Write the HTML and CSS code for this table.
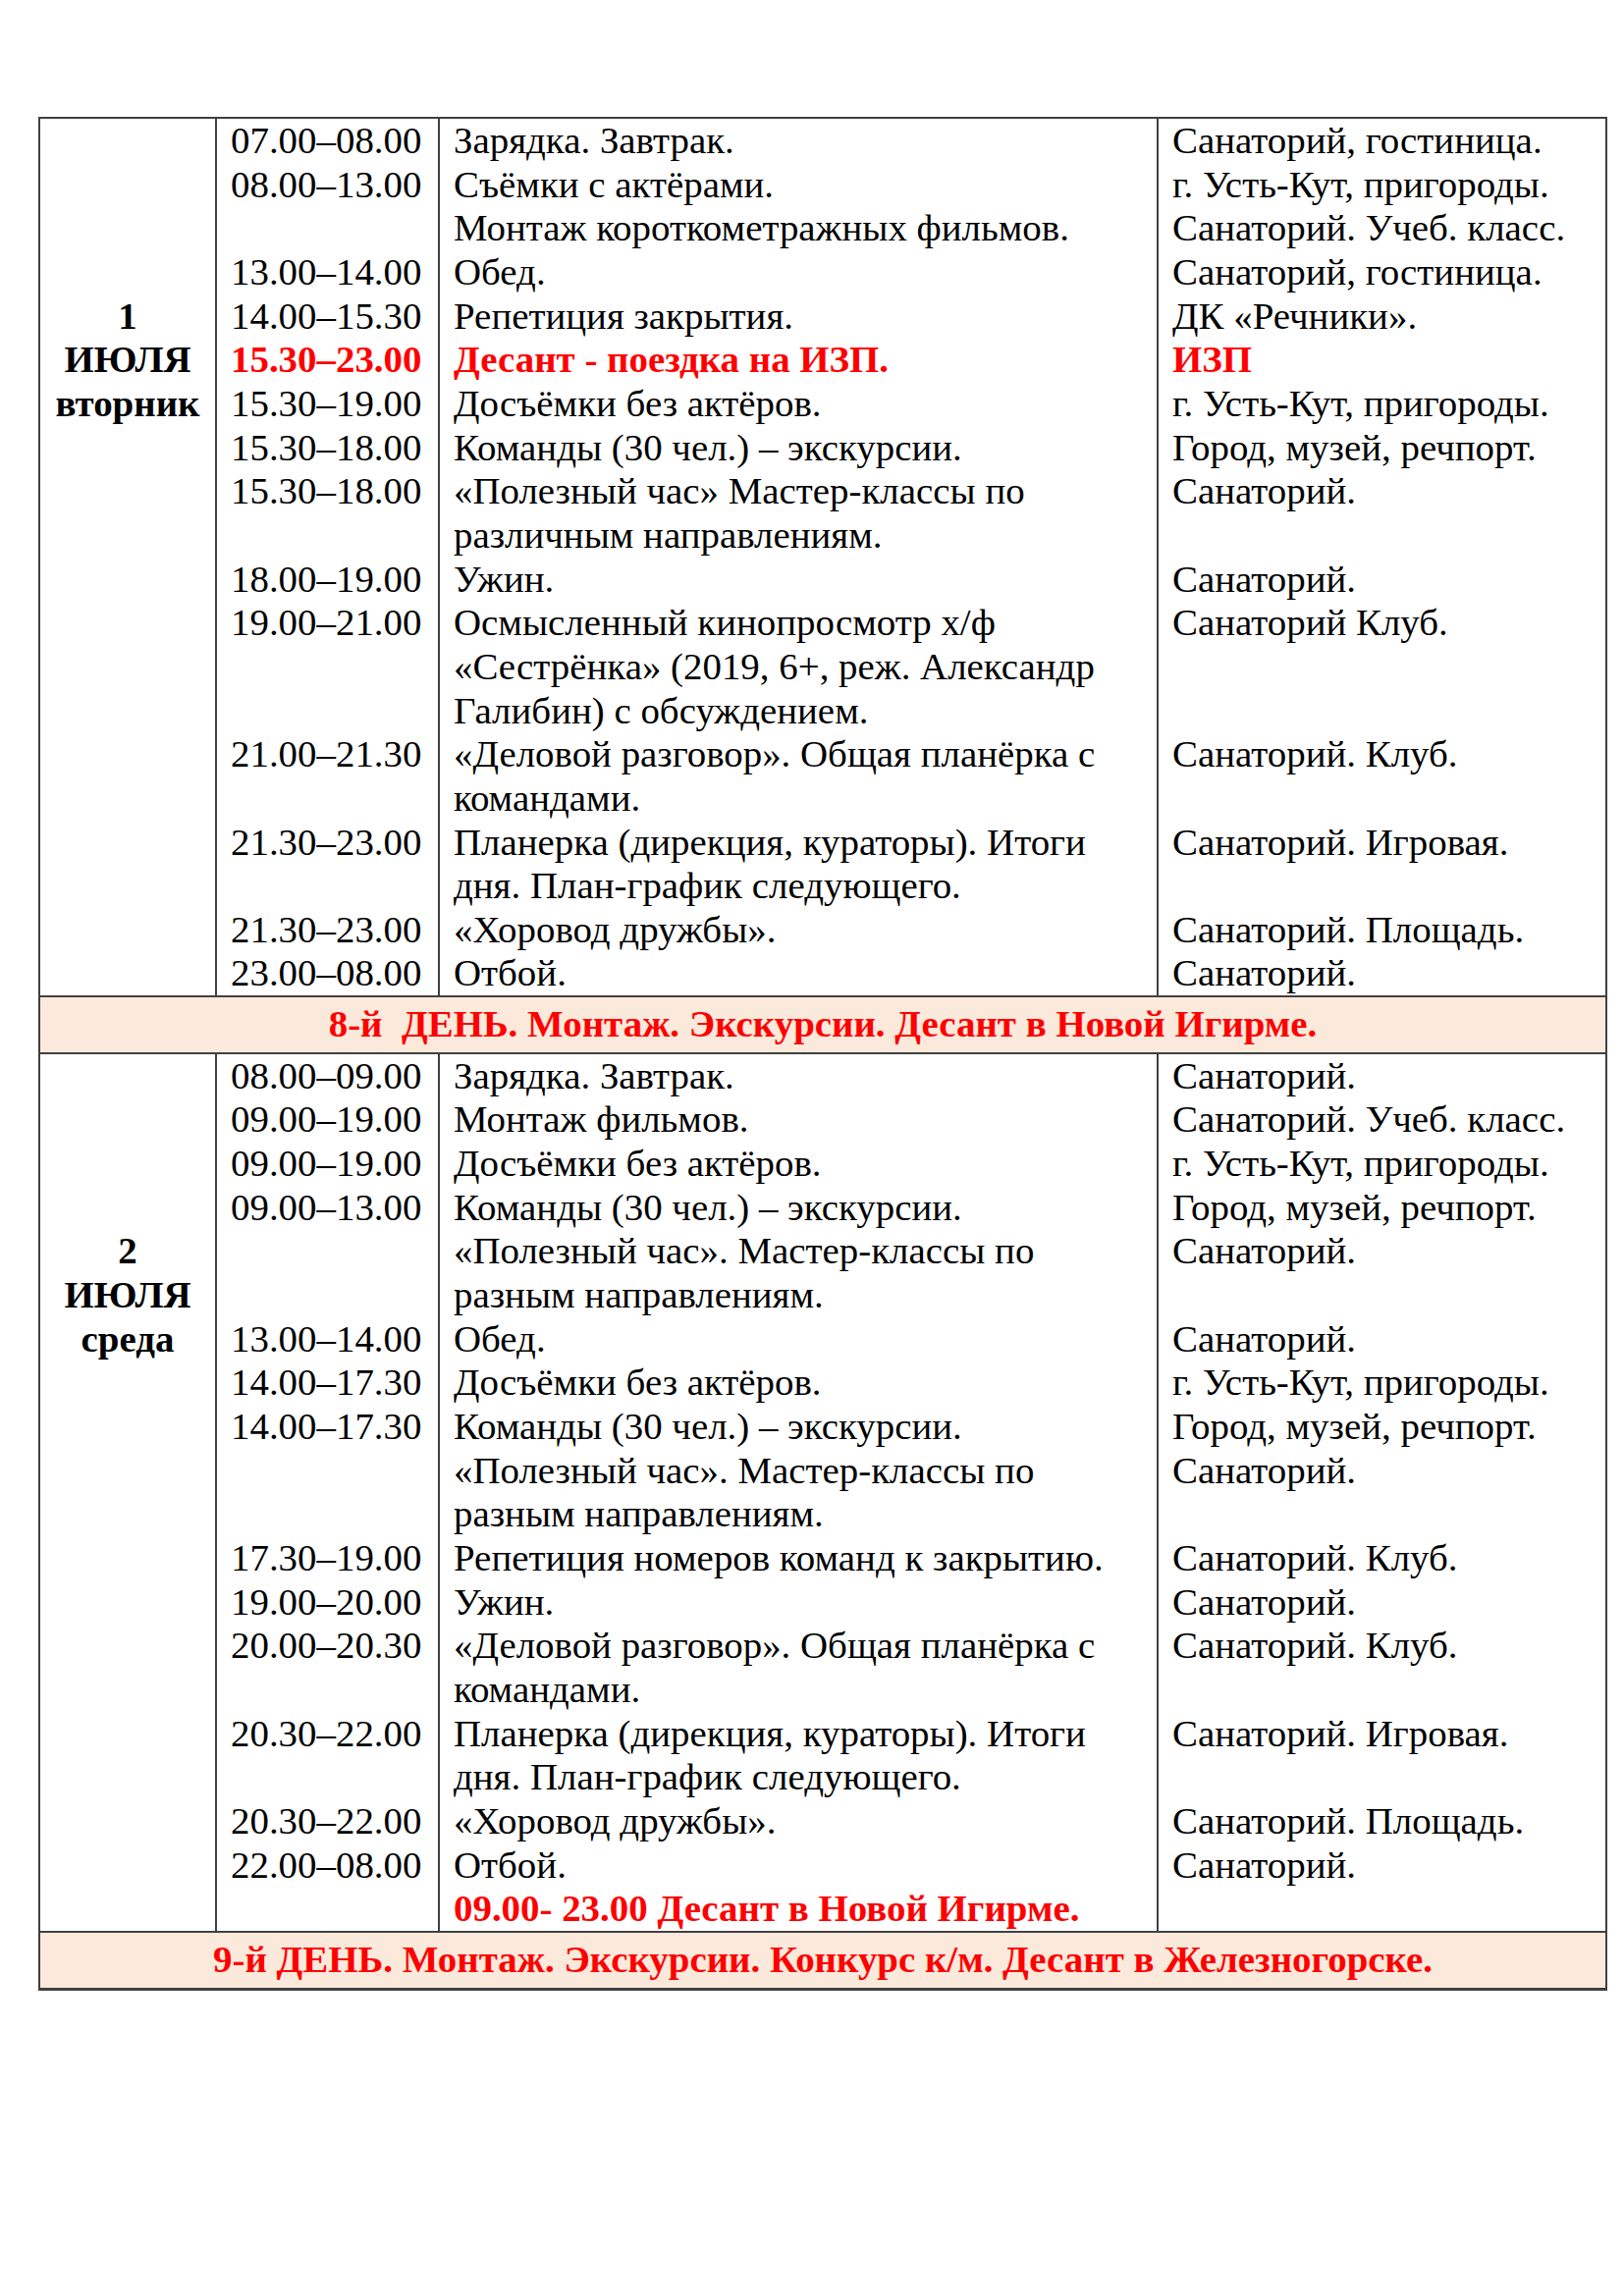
FILE: index.html
```html
<!DOCTYPE html>
<html lang="ru">
<head>
<meta charset="utf-8">
<title>Расписание</title>
<link rel="stylesheet" href="styles.css">
</head>
<body>
<table class="sched">
  <colgroup>
    <col class="c-day"><col class="c-time"><col class="c-act"><col class="c-place">
  </colgroup>
  <tbody>
    <tr>
      <td class="day" rowspan="15">1<br>ИЮЛЯ<br>вторник</td>
      <td class="time">07.00–08.00</td><td class="act">Зарядка. Завтрак.</td><td class="place">Санаторий, гостиница.</td>
    </tr>
    <tr><td class="time">08.00–13.00</td><td class="act">Съёмки с актёрами.</td><td class="place">г. Усть-Кут, пригороды.</td></tr>
    <tr><td class="time"></td><td class="act">Монтаж короткометражных фильмов.</td><td class="place">Санаторий. Учеб. класс.</td></tr>
    <tr><td class="time">13.00–14.00</td><td class="act">Обед.</td><td class="place">Санаторий, гостиница.</td></tr>
    <tr><td class="time">14.00–15.30</td><td class="act">Репетиция закрытия.</td><td class="place">ДК «Речники».</td></tr>
    <tr class="hot"><td class="time">15.30–23.00</td><td class="act">Десант - поездка на ИЗП.</td><td class="place">ИЗП</td></tr>
    <tr><td class="time">15.30–19.00</td><td class="act">Досъёмки без актёров.</td><td class="place">г. Усть-Кут, пригороды.</td></tr>
    <tr><td class="time">15.30–18.00</td><td class="act">Команды (30 чел.) – экскурсии.</td><td class="place">Город, музей, речпорт.</td></tr>
    <tr><td class="time">15.30–18.00</td><td class="act">«Полезный час» Мастер-классы по<br>различным направлениям.</td><td class="place">Санаторий.</td></tr>
    <tr><td class="time">18.00–19.00</td><td class="act">Ужин.</td><td class="place">Санаторий.</td></tr>
    <tr><td class="time">19.00–21.00</td><td class="act">Осмысленный кинопросмотр х/ф<br>«Сестрёнка» (2019, 6+, реж. Александр<br>Галибин) с обсуждением.</td><td class="place">Санаторий Клуб.</td></tr>
    <tr><td class="time">21.00–21.30</td><td class="act">«Деловой разговор». Общая планёрка с<br>командами.</td><td class="place">Санаторий. Клуб.</td></tr>
    <tr><td class="time">21.30–23.00</td><td class="act">Планерка (дирекция, кураторы). Итоги<br>дня. План-график следующего.</td><td class="place">Санаторий. Игровая.</td></tr>
    <tr><td class="time">21.30–23.00</td><td class="act">«Хоровод дружбы».</td><td class="place">Санаторий. Площадь.</td></tr>
    <tr class="last"><td class="time">23.00–08.00</td><td class="act">Отбой.</td><td class="place">Санаторий.</td></tr>

    <tr class="band"><td colspan="4">8-й&nbsp; ДЕНЬ. Монтаж. Экскурсии. Десант в Новой Игирме.</td></tr>

    <tr>
      <td class="day" rowspan="16">2<br>ИЮЛЯ<br>среда</td>
      <td class="time">08.00–09.00</td><td class="act">Зарядка. Завтрак.</td><td class="place">Санаторий.</td>
    </tr>
    <tr><td class="time">09.00–19.00</td><td class="act">Монтаж фильмов.</td><td class="place">Санаторий. Учеб. класс.</td></tr>
    <tr><td class="time">09.00–19.00</td><td class="act">Досъёмки без актёров.</td><td class="place">г. Усть-Кут, пригороды.</td></tr>
    <tr><td class="time">09.00–13.00</td><td class="act">Команды (30 чел.) – экскурсии.</td><td class="place">Город, музей, речпорт.</td></tr>
    <tr><td class="time"></td><td class="act">«Полезный час». Мастер-классы по<br>разным направлениям.</td><td class="place">Санаторий.</td></tr>
    <tr><td class="time">13.00–14.00</td><td class="act">Обед.</td><td class="place">Санаторий.</td></tr>
    <tr><td class="time">14.00–17.30</td><td class="act">Досъёмки без актёров.</td><td class="place">г. Усть-Кут, пригороды.</td></tr>
    <tr><td class="time">14.00–17.30</td><td class="act">Команды (30 чел.) – экскурсии.</td><td class="place">Город, музей, речпорт.</td></tr>
    <tr><td class="time"></td><td class="act">«Полезный час». Мастер-классы по<br>разным направлениям.</td><td class="place">Санаторий.</td></tr>
    <tr><td class="time">17.30–19.00</td><td class="act">Репетиция номеров команд к закрытию.</td><td class="place">Санаторий. Клуб.</td></tr>
    <tr><td class="time">19.00–20.00</td><td class="act">Ужин.</td><td class="place">Санаторий.</td></tr>
    <tr><td class="time">20.00–20.30</td><td class="act">«Деловой разговор». Общая планёрка с<br>командами.</td><td class="place">Санаторий. Клуб.</td></tr>
    <tr><td class="time">20.30–22.00</td><td class="act">Планерка (дирекция, кураторы). Итоги<br>дня. План-график следующего.</td><td class="place">Санаторий. Игровая.</td></tr>
    <tr><td class="time">20.30–22.00</td><td class="act">«Хоровод дружбы».</td><td class="place">Санаторий. Площадь.</td></tr>
    <tr><td class="time">22.00–08.00</td><td class="act">Отбой.</td><td class="place">Санаторий.</td></tr>
    <tr class="last"><td class="time"></td><td class="act hot-text">09.00- 23.00 Десант в Новой Игирме.</td><td class="place"></td></tr>

    <tr class="band band-end"><td colspan="4">9-й ДЕНЬ. Монтаж. Экскурсии. Конкурс к/м. Десант в Железногорске.</td></tr>
  </tbody>
</table>
</body>
</html>
```

FILE: styles.css
```css
html, body {
  margin: 0;
  padding: 0;
  background: #ffffff;
}

body {
  width: 1654px;
  min-height: 2339px;
  padding-top: 119px;
  box-sizing: border-box;
  font-family: "Liberation Serif", "Times New Roman", serif;
  font-size: 38.9px;
  line-height: 44.65px;
  color: #000000;
}

.sched {
  margin-left: 39px;
  width: 1596px;
  border-collapse: collapse;
  table-layout: fixed;
}

.c-day { width: 180px; }
.c-time { width: 227px; }
.c-act { width: 732px; }
.c-place { width: 457px; }

.sched td {
  padding: 0 14px 0 14px;
  vertical-align: top;
  white-space: nowrap;
  border-left: 2px solid #404040;
  border-right: 2px solid #404040;
  overflow: hidden;
}

.sched tr:first-child td,
.sched .band + tr td {
  border-top: 2px solid #404040;
}

.sched .day {
  text-align: center;
  font-weight: bold;
  padding: 178.6px 0 0 0;
}

.hot td,
.hot-text {
  color: #ff0000;
  font-weight: bold;
}

.band td {
  border: 2px solid #404040;
  background: #fbe9db;
  color: #ff0000;
  font-weight: bold;
  text-align: center;
  padding: 5px 0 6px 0;
}

.band-end td {
  border-bottom: 3px solid #404040;
}
```
